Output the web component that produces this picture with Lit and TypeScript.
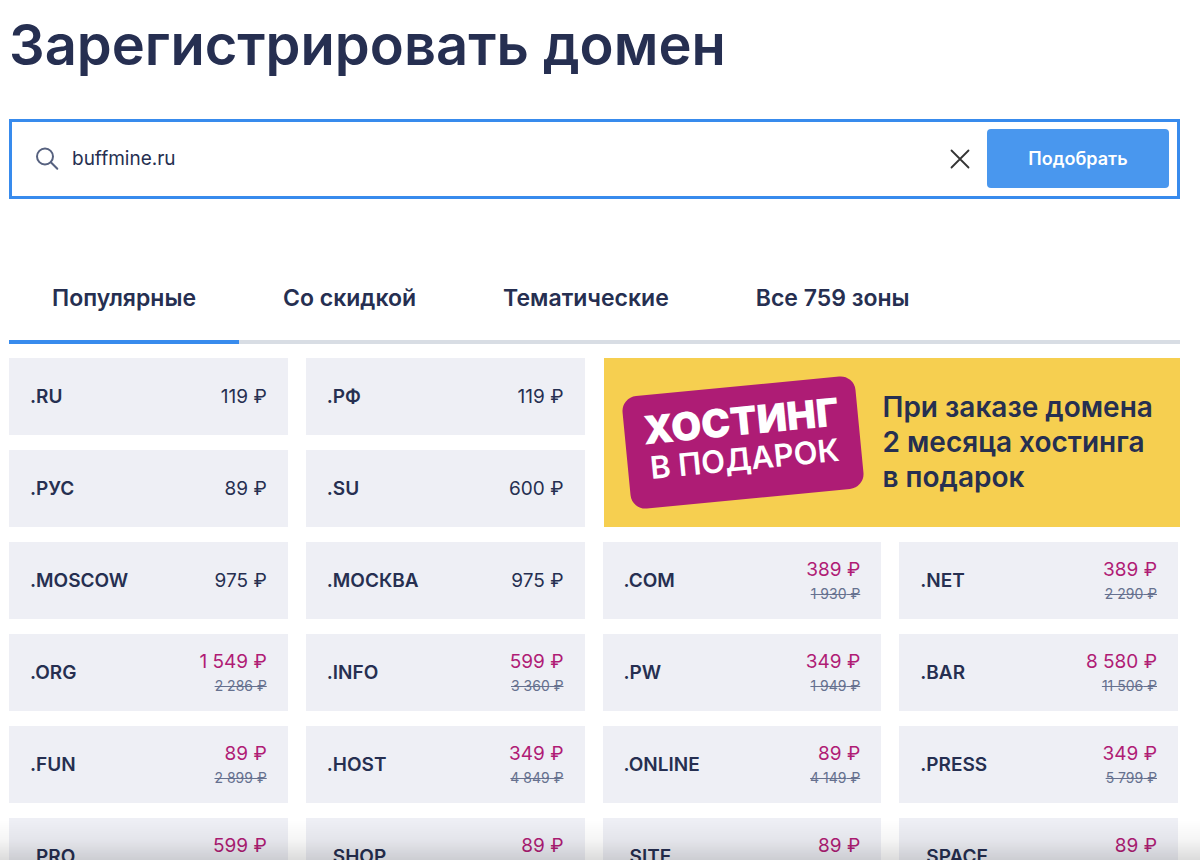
import { LitElement, html, css, nothing } from "lit";
import { customElement, property, state } from "lit/decorators.js";
import { classMap } from "lit/directives/class-map.js";

interface Zone {
  name: string;
  price: string;
  old?: string;
}

const FEATURED: Zone[] = [
  { name: ".RU", price: "119" },
  { name: ".РФ", price: "119" },
];

const ZONES: Zone[] = [
  { name: ".РУС", price: "89" },
  { name: ".SU", price: "600" },
  { name: ".MOSCOW", price: "975" },
  { name: ".МОСКВА", price: "975" },
  { name: ".COM", price: "389", old: "1 930" },
  { name: ".NET", price: "389", old: "2 290" },
  { name: ".ORG", price: "1 549", old: "2 286" },
  { name: ".INFO", price: "599", old: "3 360" },
  { name: ".PW", price: "349", old: "1 949" },
  { name: ".BAR", price: "8 580", old: "11 506" },
  { name: ".FUN", price: "89", old: "2 899" },
  { name: ".HOST", price: "349", old: "4 849" },
  { name: ".ONLINE", price: "89", old: "4 149" },
  { name: ".PRESS", price: "349", old: "5 799" },
  { name: ".PRO", price: "599", old: "2 899" },
  { name: ".SHOP", price: "89", old: "3 899" },
  { name: ".SITE", price: "89", old: "3 499" },
  { name: ".SPACE", price: "89", old: "2 899" },
];

const TABS = ["Популярные", "Со скидкой", "Тематические", "Все 759 зоны"];

@customElement("zone-card")
class ZoneCard extends LitElement {
  @property({ attribute: false }) zone!: Zone;

  static styles = css`
    :host {
      display: block;
    }
    .card {
      box-sizing: border-box;
      height: 100%;
      min-height: 77px;
      padding: 0 21px;
      display: flex;
      align-items: center;
      justify-content: space-between;
      background: #eeeff5;
      color: #262f51;
      text-decoration: none;
      font-size: 19px;
      line-height: 24px;
    }
    .name {
      font-weight: 600;
    }
    .prices {
      display: flex;
      flex-direction: column;
      align-items: flex-end;
      white-space: nowrap;
    }
    .discounted {
      padding-top: 3px;
    }
    .sale {
      color: #b01c75;
    }
    .old {
      color: #66718f;
      font-size: 14px;
    }
  `;

  render() {
    const { name, price, old } = this.zone;
    return html`<a class="card" href="#">
      <span class="name">${name}</span>
      <span class=${classMap({ prices: true, discounted: !!old })}>
        <span class=${classMap({ sale: !!old })}>${price} ₽</span>
        ${old ? html`<s class="old">${old} ₽</s>` : nothing}
      </span>
    </a>`;
  }
}

@customElement("app-root")
class AppRoot extends LitElement {
  @state() private query = "buffmine.ru";
  @state() private active = 0;

  static styles = css`
    :host {
      display: block;
      height: 100vh;
      overflow: hidden;
      background: #fff;
      color: #262f51;
      font-family: Inter, "Liberation Sans", sans-serif;
    }
    .page {
      padding: 9px 20px 0 9px;
    }
    .title {
      margin: 0;
      font-size: 56px;
      line-height: 72px;
      font-weight: 600;
    }
    .search {
      margin-top: 38px;
      border: 3px solid #388bed;
      padding: 7px 8px 8px 24px;
      display: flex;
      align-items: center;
    }
    .lens {
      flex: none;
      display: block;
    }
    .field {
      flex: 1;
      min-width: 0;
      border: 0;
      outline: 0;
      padding: 0 12px;
      background: none;
      color: #262f51;
      font: 400 19px/24px Inter, sans-serif;
    }
    .clear {
      border: 0;
      padding: 0;
      margin-right: 16px;
      background: none;
      display: block;
    }
    .cross {
      display: block;
    }
    .submit {
      border: 0;
      border-radius: 4px;
      width: 182px;
      height: 59px;
      background: #4997ee;
      color: #fff;
      font: 600 18px/24px Inter, sans-serif;
    }
    .tabs {
      margin-top: 57px;
      display: flex;
      gap: 1px;
      box-shadow: inset 0 -4px #d8dde4;
    }
    .tab {
      border: 0;
      border-bottom: 4px solid transparent;
      background: none;
      padding: 27px 43px;
      color: inherit;
      font: 600 23px/30px Inter, sans-serif;
      white-space: nowrap;
    }
    .active {
      border-bottom-color: #388bed;
    }
    .grid {
      margin: 14px 2px 0 0;
      display: grid;
      grid-template-columns: repeat(4, minmax(0, 1fr));
      gap: 15px 18px;
    }
    .banner {
      grid-column: span 2;
      grid-row: span 2;
      margin: 0 -2px 0 1px;
      padding: 0 22px;
      display: flex;
      align-items: center;
      gap: 23px;
      background: #f6cf50;
      color: inherit;
      text-decoration: none;
    }
    .sticker {
      flex: none;
      box-sizing: border-box;
      width: 234px;
      height: 113px;
      padding-bottom: 8px;
      border-radius: 15px;
      background: #ae1c75;
      color: #fff;
      transform: rotate(-5.5deg);
      display: flex;
      flex-direction: column;
      align-items: center;
      justify-content: center;
      white-space: nowrap;
    }
    .gift {
      font-size: 39px;
      line-height: 40px;
      font-weight: 900;
    }
    .sub {
      font-size: 31px;
      line-height: 36px;
      font-weight: 600;
    }
    .promo {
      font-size: 28px;
      line-height: 35px;
      font-weight: 600;
      white-space: nowrap;
    }
    .fade {
      position: fixed;
      left: 0;
      right: 0;
      bottom: 0;
      height: 40px;
      pointer-events: none;
      background: linear-gradient(rgba(0, 0, 0, 0), rgba(0, 0, 0, 0.04) 50%, rgba(0, 0, 0, 0.14));
    }
  `;

  private card(zone: Zone) {
    return html`<zone-card .zone=${zone}></zone-card>`;
  }

  render() {
    return html`
      <main class="page">
        <h1 class="title">Зарегистрировать домен</h1>
        <form class="search" @submit=${(e: Event) => e.preventDefault()}>
          <svg class="lens" width="24" height="24" viewBox="0 0 24 24" fill="none" stroke="#56617f" stroke-width="2" stroke-linecap="round">
            <circle cx="9" cy="9.5" r="8" />
            <path d="M14.8 15.3L21.3 21.8" />
          </svg>
          <input
            class="field"
            type="text"
            aria-label="Имя домена"
            .value=${this.query}
            @input=${(e: Event) => (this.query = (e.target as HTMLInputElement).value)}
          />
          <button class="clear" type="button" aria-label="Очистить" @click=${() => (this.query = "")}>
            <svg class="cross" width="22" height="22" viewBox="0 0 22 22" fill="none" stroke="#333" stroke-width="1.8" stroke-linecap="round">
              <path d="M2.5 2.5L19.5 19.5M19.5 2.5L2.5 19.5" />
            </svg>
          </button>
          <button class="submit" type="submit">Подобрать</button>
        </form>
        <div class="tabs" role="tablist">
          ${TABS.map(
            (label, i) => html`<button
              class=${classMap({ tab: true, active: i === this.active })}
              role="tab"
              aria-selected=${i === this.active ? "true" : "false"}
              @click=${() => (this.active = i)}
            >${label}</button>`
          )}
        </div>
        <div class="grid">
          ${FEATURED.map((z) => this.card(z))}
          <a class="banner" href="#">
            <span class="sticker">
              <span class="gift">ХОСТИНГ</span>
              <span class="sub">В ПОДАРОК</span>
            </span>
            <span class="promo">При заказе домена<br />2 месяца хостинга<br />в подарок</span>
          </a>
          ${ZONES.map((z) => this.card(z))}
        </div>
      </main>
      <div class="fade"></div>
    `;
  }
}
